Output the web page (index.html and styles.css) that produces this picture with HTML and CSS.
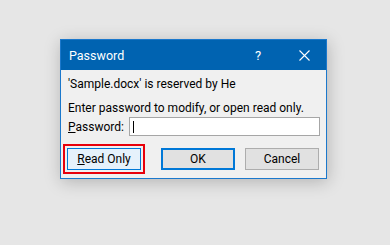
FILE: index.html
```html
<!DOCTYPE html>
<html>
<head>
<meta charset="utf-8">
<link rel="stylesheet" href="styles.css">
</head>
<body>
<div class="dialog">
  <div class="titlebar">
    <span class="title">Password</span>
    <span class="help">?</span>
    <span class="close">
      <svg width="11" height="11" viewBox="0 0 11 11"><path d="M0.5 0.5 L10.5 10.5 M10.5 0.5 L0.5 10.5" stroke="#fff" stroke-width="1.1" fill="none"/></svg>
    </span>
  </div>
  <div class="content">
    <p class="line first">'Sample.docx' is reserved by He</p>
    <p class="line second">Enter password to modify, or open read only.</p>
    <div class="field">
      <label class="label"><u>P</u>assword:</label>
      <div class="input"><span class="caret"></span></div>
    </div>
    <div class="buttons">
      <button class="btn readonly"><u>R</u>ead Only</button>
      <button class="btn ok">OK</button>
      <button class="btn cancel">Cancel</button>
    </div>
  </div>
</div>
</body>
</html>
```
FILE: styles.css
```css
html, body {
  margin: 0;
  padding: 0;
}
body {
  background: #e6e6e6;
  width: 390px;
  height: 245px;
  padding: 39px 0 0 60px;
  box-sizing: border-box;
  font-family: Roboto, "Noto Sans", sans-serif;
  font-size: 12px;
  color: #000;
}
.dialog {
  width: 267px;
  box-sizing: border-box;
  border: 1px solid #1b78cc;
  background: #f0f0f0;
  box-shadow: 1px 3px 16px rgba(0, 0, 0, 0.22);
}
.titlebar {
  height: 30px;
  background: #0063b1;
  color: #fff;
  display: flex;
  align-items: center;
  padding-left: 8px;
}
.title {
  font-size: 12.5px;
  flex: 1;
}
.help {
  font-size: 13px;
  width: 10px;
  margin-right: 34px;
}
.close {
  display: flex;
  width: 11px;
  height: 11px;
  margin-right: 16px;
}
.content {
  padding: 6px 6px 8px 6px;
}
.line {
  margin: 0;
  line-height: 16px;
  padding-left: 1px;
  white-space: nowrap;
}
.second {
  margin-top: 8px;
}
.field {
  display: flex;
  align-items: center;
  margin-top: 1px;
}
.label {
  width: 61px;
  padding-left: 1px;
  white-space: nowrap;
}
.input {
  width: 192px;
  height: 19px;
  box-sizing: border-box;
  border: 1px solid #a6a6a6;
  background: #fff;
  display: flex;
  align-items: center;
  padding-left: 3px;
}
.caret {
  width: 1px;
  height: 12px;
  background: #000;
}
.buttons {
  display: flex;
  margin-top: 12px;
  gap: 10px;
}
.btn {
  width: 74px;
  height: 22px;
  box-sizing: border-box;
  font-family: inherit;
  font-size: 12px;
  color: #000;
  background: #e1e1e1;
  border: 1px solid #adadad;
  padding: 0;
  margin: 0;
}
.readonly {
  background: #e5f1fb;
  border-color: #0078d7;
  outline: 2px solid #e8000b;
  outline-offset: 2px;
  margin-right: 10px;
}
.ok {
  border: 2px solid #0078d7;
}
```
